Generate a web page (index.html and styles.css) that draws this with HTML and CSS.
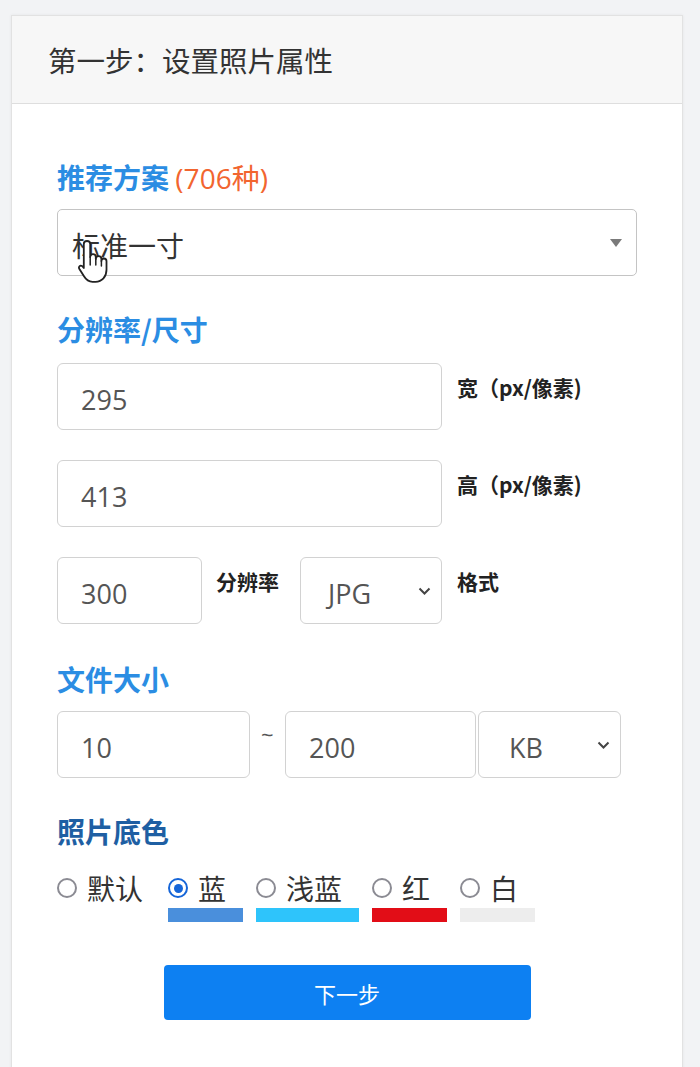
FILE: index.html
```html
<!DOCTYPE html>
<html lang="zh-CN">
<head>
  <meta charset="UTF-8" />
  <meta name="viewport" content="width=device-width, initial-scale=1" />
  <title>设置照片属性</title>
  <link rel="stylesheet" href="styles.css">
</head>
<body>
  <div class="card">
    <div class="card-header">第一步：设置照片属性</div>

    <div class="card-body">
      <h2 class="field-title title-plan">推荐方案 <span class="count">(706种)</span></h2>
      <div class="select select-plan">
        <span>标准一寸</span>
        <svg class="caret" width="12" height="8" viewBox="0 0 12 8"><path d="M0 0h12L6 8z" fill="#7a7a7a"/></svg>
        <svg class="cursor" width="32" height="46" viewBox="0 0 32 46">
          <path d="M10 2c2 0 3.2 1.3 3.2 3v13c0-1.6 1.2-2.8 2.8-2.8s2.8 1.2 2.8 2.8v2c0-1.6 1.2-2.8 2.8-2.8s2.8 1.2 2.8 2.8v2c0-1.4 1.1-2.5 2.5-2.5s2.6 1.2 2.6 2.8v8.5c0 7-4.5 12-11 12h-3c-4 0-6.5-2.2-8.5-5.5L2.4 30c-1.3-2 .6-4.2 2.6-3l1.8 2V5c0-1.7 1.3-3 3.2-3z" fill="#fff" stroke="#222" stroke-width="1.8" stroke-linejoin="round"/>
          <path d="M13.2 18v8M18.8 20v6M24.4 22v5" stroke="#222" stroke-width="1.5" stroke-linecap="round"/>
        </svg>
      </div>

      <h2 class="field-title title-size">分辨率/尺寸</h2>
      <div class="form-row row-first">
        <input class="input input-wide" value="295">
        <span class="hint">宽（px/像素)</span>
      </div>
      <div class="form-row">
        <input class="input input-wide" value="413">
        <span class="hint">高（px/像素)</span>
      </div>
      <div class="form-row">
        <input class="input input-dpi" value="300">
        <span class="hint hint-dpi">分辨率</span>
        <div class="select select-small select-format">
          <span>JPG</span>
          <svg class="chevron" width="13" height="9" viewBox="0 0 13 9"><path d="M1.5 1.5L6.5 6.5l5-5" fill="none" stroke="#444" stroke-width="2"/></svg>
        </div>
        <span class="hint">格式</span>
      </div>

      <h2 class="field-title title-file">文件大小</h2>
      <div class="form-row row-file">
        <input class="input input-min" value="10">
        <span class="tilde">~</span>
        <input class="input input-max" value="200">
        <div class="select select-small select-unit">
          <span>KB</span>
          <svg class="chevron" width="13" height="9" viewBox="0 0 13 9"><path d="M1.5 1.5L6.5 6.5l5-5" fill="none" stroke="#444" stroke-width="2"/></svg>
        </div>
      </div>

      <h2 class="field-title title-color">照片底色</h2>
      <div class="color-list">
        <label class="color-option option-default">
          <span class="radio-line"><span class="radio"></span>默认</span>
        </label>
        <label class="color-option">
          <span class="radio-line"><span class="radio checked"></span>蓝</span>
          <span class="swatch" style="background:#4a8fdc"></span>
        </label>
        <label class="color-option">
          <span class="radio-line"><span class="radio"></span>浅蓝</span>
          <span class="swatch" style="background:#2ec4fb"></span>
        </label>
        <label class="color-option">
          <span class="radio-line"><span class="radio"></span>红</span>
          <span class="swatch" style="background:#e20d17"></span>
        </label>
        <label class="color-option">
          <span class="radio-line"><span class="radio"></span>白</span>
          <span class="swatch" style="background:#ededed"></span>
        </label>
      </div>

      <button class="next-btn">下一步</button>
    </div>
  </div>
</body>
</html>
```

FILE: styles.css
```css
* {
  box-sizing: border-box;
  margin: 0;
  padding: 0;
  font-family: "Open Sans", "Noto Sans CJK SC", sans-serif;
}

body {
  background-color: #f2f3f5;
  padding: 15px 17px 0 11px;
}

.card {
  background-color: #ffffff;
  border: 1px solid #e2e2e2;
  box-shadow: 0 0 3px rgba(0, 0, 0, 0.06);
  min-height: 1060px;
}

.card-header {
  height: 88px;
  display: flex;
  align-items: center;
  padding-left: 36px;
  background-color: #f7f7f7;
  border-bottom: 1px solid #dedede;
  font-family: "Noto Sans CJK SC", sans-serif;
  font-size: 28.5px;
  color: #333;
}

.card-body {
  padding: 56px 45px 40px;
  display: flex;
  flex-direction: column;
}

.field-title {
  font-family: "Noto Sans CJK SC", sans-serif;
  font-size: 28px;
  line-height: 34px;
  font-weight: 700;
  color: #2b8de3;
}

.field-title .count {
  font-weight: 400;
  color: #f2652f;
}

.title-size { margin-top: 36px; }
.title-file { margin-top: 38px; }
.title-color { margin-top: 36px; color: #1e5fa3; }

.select {
  position: relative;
  display: flex;
  align-items: center;
  justify-content: space-between;
  height: 67px;
  border: 1px solid #c4c4c4;
  border-radius: 5px;
  background-color: #fff;
  font-family: "Noto Sans CJK SC", sans-serif;
  font-size: 28px;
  color: #333;
}

.select-plan {
  margin-top: 14px;
  padding: 0 14px 0 14px;
}

.select-plan span {
  padding-top: 4px;
}

.cursor {
  position: absolute;
  left: 19px;
  top: 29px;
}

.form-row {
  display: flex;
  align-items: flex-start;
  margin-top: 30px;
}

.row-first { margin-top: 17px; }
.row-file { margin-top: 15px; }

.input {
  height: 67px;
  border: 1px solid #d2d2d2;
  border-radius: 6px;
  padding: 6px 0 0 23px;
  font-size: 27px;
  color: #555;
  background-color: #fff;
  outline: none;
}

.input-wide { width: 385px; }
.input-dpi { width: 145px; }
.input-min { width: 193px; }
.input-max { width: 191px; }

.hint {
  margin-left: 15px;
  padding-top: 9px;
  font-family: "Noto Sans CJK SC", sans-serif;
  font-size: 21px;
  font-weight: 700;
  color: #222;
  white-space: nowrap;
}

.hint-dpi {
  width: 64px;
  margin-right: 20px;
  margin-left: 14px;
}

.select-small {
  height: 67px;
  border-color: #d2d2d2;
  border-radius: 6px;
  padding: 6px 10px 0 27px;
  font-family: "Open Sans", sans-serif;
  font-size: 27px;
  color: #555;
}

.select-small .chevron {
  margin-top: -4px;
}

.select-format { width: 142px; }
.select-unit { width: 143px; margin-left: 2px; padding-left: 30px; }

.tilde {
  width: 35px;
  padding: 8px 0 0 11px;
  font-size: 22px;
  color: #555;
}

.color-list {
  display: flex;
  gap: 13px;
  margin-top: 23px;
}

.color-option {
  display: flex;
  flex-direction: column;
  font-family: "Noto Sans CJK SC", sans-serif;
  font-size: 28px;
  color: #333;
}

.radio-line {
  display: flex;
  align-items: center;
  height: 34px;
  padding-right: 17px;
}

.option-default .radio-line {
  padding-right: 12px;
}

.radio {
  flex-shrink: 0;
  width: 20px;
  height: 20px;
  margin-right: 10px;
  border: 2.5px solid #8b8b93;
  border-radius: 50%;
  display: flex;
  align-items: center;
  justify-content: center;
}

.radio.checked {
  border-color: #1565d8;
}

.radio.checked::after {
  content: "";
  width: 9px;
  height: 9px;
  border-radius: 50%;
  background-color: #1565d8;
}

.swatch {
  height: 14px;
  margin-top: 3px;
}

.next-btn {
  align-self: center;
  width: 367px;
  height: 55px;
  margin-top: 43px;
  border: none;
  border-radius: 4px;
  background-color: #0d80f2;
  color: #fff;
  font-family: "Noto Sans CJK SC", sans-serif;
  font-size: 22px;
  cursor: pointer;
}
```
